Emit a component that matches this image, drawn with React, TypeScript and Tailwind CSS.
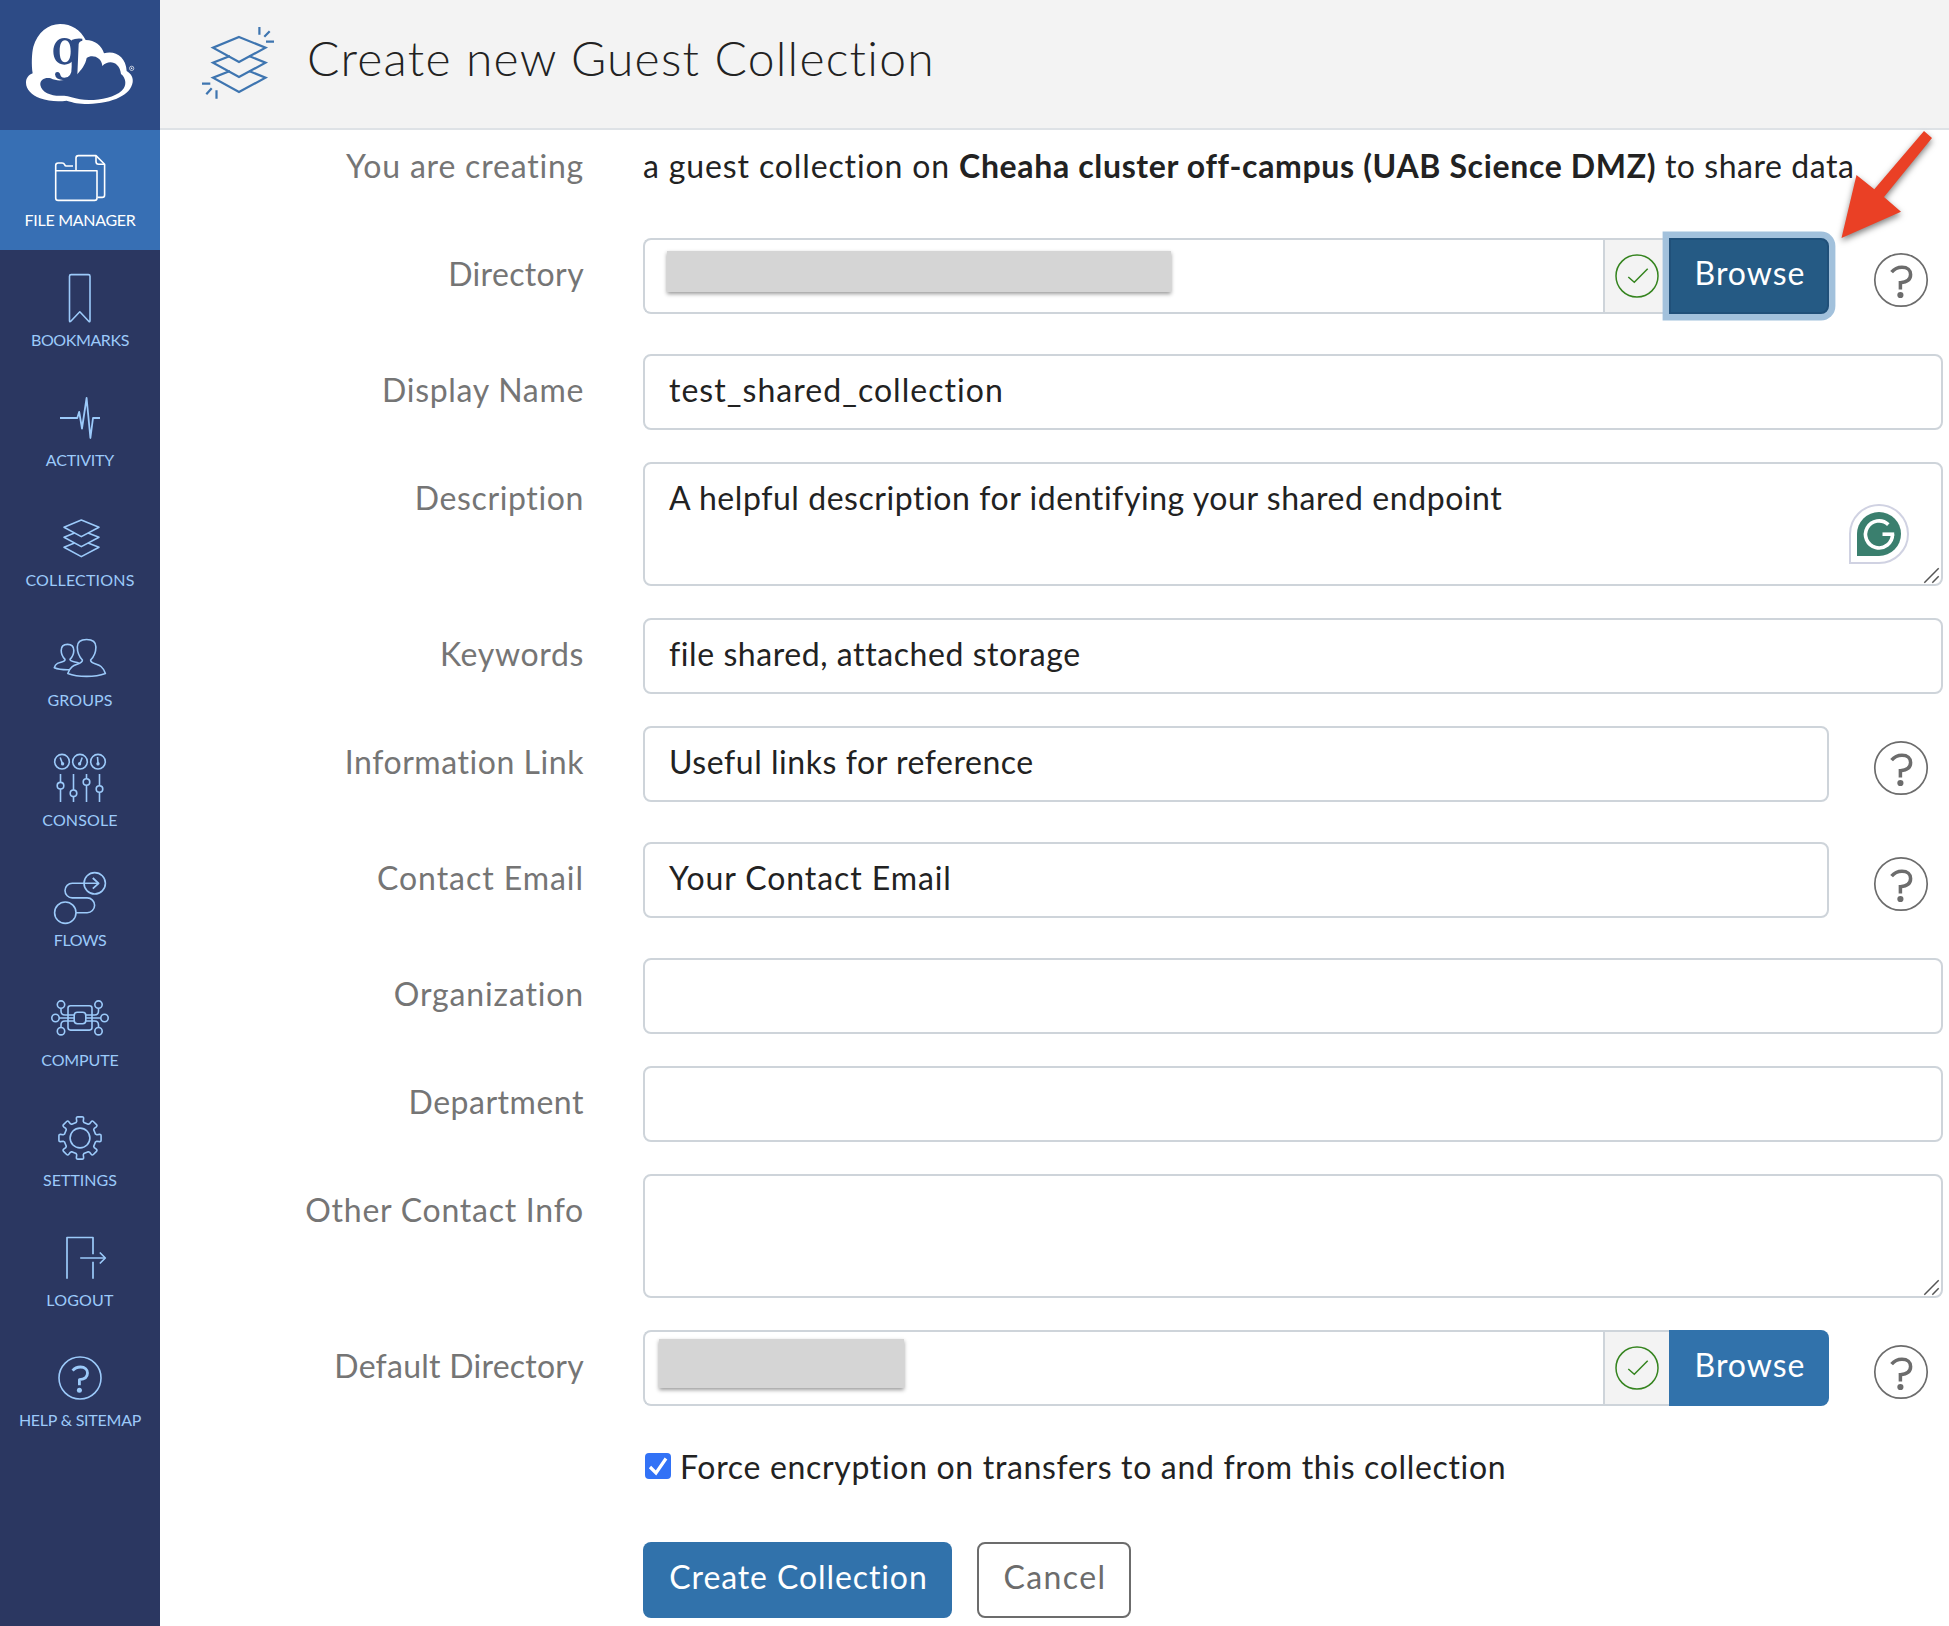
import type { ReactNode } from 'react';

function gearPath(cx: number, cy: number): string {
  const pt = (r: number, deg: number) => {
    const a = (deg * Math.PI) / 180;
    return `${(cx + r * Math.cos(a)).toFixed(2)} ${(cy + r * Math.sin(a)).toFixed(2)}`;
  };
  const parts: string[] = [];
  for (let i = 0; i < 8; i++) {
    const a = i * 45;
    parts.push(`${i === 0 ? 'M' : 'L'}${pt(16, a - 14)}`);
    parts.push(`L${pt(17.2, a - 11)}L${pt(19.8, a - 10.5)}Q${pt(21.4, a - 10)} ${pt(21.2, a - 6)}`);
    parts.push(`L${pt(21.2, a + 6)}Q${pt(21.4, a + 10)} ${pt(19.8, a + 10.5)}L${pt(17.2, a + 11)}L${pt(16, a + 14)}`);
  }
  return parts.join('') + 'Z';
}

const icons: Record<string, ReactNode> = {
  files: (
    <>
      <path d="M55.7 41V35.5Q55.7 33 58.2 33H62Q64 33 64.6 34.6T66.6 36H73" />
      <path d="M55.7 40.8H97V68Q97 70.4 94.6 70.4H58.1Q55.7 70.4 55.7 68Z" />
      <path d="M76 40.5V28Q76 25.6 78.4 25.6H96L104.6 34.2V65Q104.6 67.4 102.2 67.4H97.5" />
      <path d="M96 26V31.5Q96 34.2 98.7 34.2H104.3" />
    </>
  ),
  bookmark: <path d="M69.5 26.2Q69.5 24.6 71.1 24.6H88.4Q90 24.6 90 26.2V70.6Q90 72.6 88.7 71.2L79.8 61.8L70.8 71.2Q69.5 72.6 69.5 70.6Z" />,
  activity: <path strokeWidth="1.8" d="M60 48H77.3L79.2 41.8L82 58.5L86.6 28L90.4 68L93 48H100" />,
  collections: (
    <>
      <path d="M81.3 30L99 37.2L81.3 46.6L64 37.2Z" />
      <path d="M74.5 43L64 47.2L81.3 56.6L99 47.2L88 43" />
      <path d="M74.5 53L64 57.2L81.3 66.6L99 57.2L88 53" />
    </>
  ),
  groups: (
    <>
      <path d="M82.4 50C79 46.500 77.300 41 77.300 37C77.300 32.200 80.500 29.500 86.600 29.500S95.900 32.200 95.900 37C95.900 41 94.200 46.500 90.600 50C90.500 54 97.500 53.500 101 56.500C103.500 58.700 104.800 61 105.400 63.500C100 65.500 93 66.400 86.600 66.400S73 65.500 67.800 63.500C68.400 61 69.700 58.700 72 56.800C75.500 53.900 82.600 54 82.400 50Z" />
      <path d="M70 59.700C64 59.900 58 59.300 54.300 57.800C54.800 55.800 55.800 54.300 57.500 53.400C60.500 51.900 65.500 52 65 49.400C62.500 46.800 61.200 43.300 61.200 40.500C61.200 36.600 63.300 34.400 67.500 34.400S73.800 36.600 73.800 40.500C73.800 43.300 72.500 46.800 70 49.400C69.700 51.700 75 51.700 79 53.200" />
    </>
  ),
  console: (
    <>
      {[62, 80, 98].map((x) => (
        <circle key={x} cx={x} cy="31.700" r="7.300" />
      ))}
      <path d="M60.200 27.500L62.200 33M82.200 27.500L80.200 33M97.500 27L98 33" />
      <path strokeWidth="3.200" strokeLinecap="round" d="M62.600 33.600V34M79.600 33.600V34M98 33.600V34" />
      <path d="M60.500 44V52.400M60.500 59V72M73.500 44V60M73.500 66.600V72M86.500 44V48.700M86.500 55.300V72M99.500 44V55.700M99.500 62.300V72" />
      <circle cx="60.500" cy="55.700" r="3.300" />
      <circle cx="73.500" cy="63.300" r="3.300" />
      <circle cx="86.500" cy="52" r="3.300" />
      <circle cx="99.500" cy="59" r="3.300" />
    </>
  ),
  flows: (
    <>
      <circle cx="94.700" cy="33.300" r="10.700" />
      <circle cx="65.300" cy="62.700" r="10.700" />
      <path d="M98.500 33.300H72.300A7.300 7.300 0 0 0 72.300 47.900H87.200A7.400 7.400 0 0 1 87.200 62.700H76" />
      <path strokeWidth="1.800" d="M92.800 28L98.600 33.300L92.800 38.600" />
    </>
  ),
  compute: (
    <>
      <rect x="68" y="35.700" width="24" height="24.400" rx="2.500" />
      <rect x="74.200" y="42.300" width="11.600" height="11.400" rx="3.200" />
      <circle cx="61" cy="34.600" r="3.700" />
      <circle cx="98.500" cy="34.600" r="3.700" />
      <circle cx="55.500" cy="48" r="3.700" />
      <circle cx="104.500" cy="48" r="3.700" />
      <circle cx="61" cy="61.200" r="3.700" />
      <circle cx="98.500" cy="61.200" r="3.700" />
      <path d="M59.200 48H74M61 38.300V41Q61 45 65 45H74M61 57.500V55Q61 51 65 51H74" />
      <path d="M100.800 48H86M98.500 38.300V41Q98.500 45 94.500 45H86M98.500 57.500V55Q98.500 51 94.500 51H86" />
    </>
  ),
  settings: (
    <>
      <circle cx="80" cy="48" r="9.900" />
      <path d={gearPath(80, 48)} />
    </>
  ),
  logout: (
    <>
      <path strokeWidth="1.700" d="M67 68.700V27.500H93V44.300M93 51.700V68.700M80.200 48H105" />
      <path strokeWidth="1.700" d="M99.800 42.500L105.300 48L99.800 53.500" />
    </>
  ),
  help: (
    <>
      <circle cx="80" cy="48" r="21" />
      <path strokeWidth="2.800" d="M72.600 40.600Q75.600 37 80.500 37C85 37 87.500 39.600 87.500 43C87.500 47.300 84.500 49.300 79.400 49.700V55.200" />
      <circle cx="79.400" cy="60.300" r="2.500" fill="currentColor" stroke="none" />
    </>
  ),
};

const nav = [
  { icon: 'files', label: 'FILE MANAGER', cls: 'tracking-[-0.3px]' },
  { icon: 'bookmark', label: 'BOOKMARKS', cls: 'tracking-[-0.4px]' },
  { icon: 'activity', label: 'ACTIVITY', cls: 'tracking-[-0.2px]' },
  { icon: 'collections', label: 'COLLECTIONS', cls: 'tracking-[0.2px]' },
  { icon: 'groups', label: 'GROUPS', cls: 'tracking-[0.1px]' },
  { icon: 'console', label: 'CONSOLE', cls: 'tracking-[0.13px]' },
  { icon: 'flows', label: 'FLOWS', cls: 'tracking-[-0.4px]' },
  { icon: 'compute', label: 'COMPUTE', cls: 'tracking-[-0.12px]' },
  { icon: 'settings', label: 'SETTINGS', cls: 'tracking-[0.02px]' },
  { icon: 'logout', label: 'LOGOUT', cls: 'tracking-[0.19px]' },
  { icon: 'help', label: 'HELP & SITEMAP', cls: 'tracking-[-0.24px]' },
];

function Logo() {
  return (
    <svg className="ml-5 mt-2.5 h-[110px] w-[120px]" viewBox="0 0 360 330">
      <path
        fill="#fff"
        d="M38 190C34 165 35 130 40 110C52 68 85 42 120 42C155 42 182 60 197 90C225 90 245 107 252 130C285 120 318 140 320 183C335 192 340 205 338 217C332 255 280 280 205 282C175 282 160 278 140 272C115 276 85 274 60 265C35 255 18 238 18 218C18 205 25 195 38 190Z"
      />
      <path
        fill="#2d4b86"
        d="M170 194C184 180 196 165 200 144C215 132 245 140 247 168C266 148 299 155 303 192C318 203 322 228 305 242C280 265 220 275 180 268C160 264 145 256 130 257C100 260 65 250 61 225C60 208 75 202 92 205C105 212 120 212 132 210C142 211 158 206 170 194Z"
      />
      <path
        fill="#2d4b86"
        fillRule="evenodd"
        d="M133 84C155 84 168 102 168 124S155 164 133 164S100 146 100 124S112 84 133 84ZM135 91C124 91 119 104 119 124S124 157 135 157S152 144 152 124S146 91 135 91Z"
      />
      <path fill="#2d4b86" d="M155 90Q166 84 187 86V92Q177 94 176 102L172 196Q158 212 132 211Q106 209 105 193Q106 184 116 187C124 192 118 203 133 203Q156 203 155 170Z" />
      <circle cx="335" cy="175" r="6.500" fill="none" stroke="#fff" strokeWidth="2" />
      <circle cx="335" cy="175" r="2.300" fill="#fff" />
    </svg>
  );
}

function Help() {
  return (
    <svg className="ml-[44px] mt-[14px] h-14 w-14 text-[#6c6c6c]" viewBox="0 0 56 56" fill="none" stroke="currentColor">
      <circle cx="28" cy="28" r="26.200" strokeWidth="1.700" />
      <path strokeWidth="3.500" d="M18.600 20.200Q22.500 15.300 29 15.300C34.500 15.300 37.600 18.300 37.600 22.500C37.600 28 33.800 30.200 27.400 30.700V37.600" />
      <circle cx="27.400" cy="43" r="3.100" fill="currentColor" stroke="none" />
    </svg>
  );
}

function Row({ label, cls, gap, children }: { label: string; cls: string; gap: string; children: ReactNode }) {
  return (
    <div className={`flex items-start ${gap}`}>
      <div className={`w-[424px] shrink-0 pt-3 text-right text-[#757575] ${cls}`}>{label}</div>
      <div className="ml-[59px] flex h-full items-start">{children}</div>
    </div>
  );
}

const box = 'rounded-[8px] border-2 border-[#ced4da] bg-white px-6 pt-2.5';

function DirectoryField({ focused, children }: { focused?: boolean; children: ReactNode }) {
  return (
    <div className="flex h-[76px] w-[1186px]">
      <div className="w-[960px] rounded-l-[8px] border-2 border-r-0 border-[#ced4da] bg-white">{children}</div>
      <div className="flex w-[66px] items-center justify-center border-y-2 border-l-2 border-[#ced4da] bg-[#f3f3f3]">
        <svg className="h-11 w-11" viewBox="-22 -22 44 44" fill="none" stroke="#35841f" strokeWidth="1.500">
          <circle r="21" />
          <path d="M-8.700 1L-2.700 6.200L10.700 -7.300" />
        </svg>
      </div>
      <button
        className={
          focused
            ? 'relative w-40 rounded-r-[8px] border-2 border-[#205079] bg-[#255a84] pb-1.5 pl-0.5 tracking-[0.98px] text-white shadow-[0_0_0_6.400px_#a2c1dc]'
            : 'w-40 rounded-r-[8px] bg-[#3172ab] pb-1.5 pl-0.5 tracking-[0.98px] text-white'
        }
      >
        Browse
      </button>
    </div>
  );
}

function Grip() {
  return (
    <svg className="absolute bottom-0 right-0 h-5 w-5" viewBox="0 0 20 20" stroke="#555" strokeWidth="1.500">
      <path d="M3.300 18.700L17.700 4.300M11.300 18.700L17.700 12.300" />
    </svg>
  );
}

export default function App() {
  return (
    <div className="flex h-[1626px] w-[1949px] overflow-hidden bg-white font-['Lato',sans-serif] text-[32px] leading-[48px] text-[#222]">
      <aside className="w-40 shrink-0 bg-[#2b3761]">
        <div className="h-[130px] overflow-hidden bg-[#2d4b86]">
          <Logo />
        </div>
        {nav.map((n, i) => (
          <div key={n.label} className={`flex h-[120px] flex-col items-center pt-[18px] ${i === 0 ? 'bg-[#376fb4] text-white' : 'text-[#9ccafa]'}`}>
            <svg className="h-[60px] w-20" viewBox="40 18 80 60" fill="none" stroke="currentColor" strokeWidth="1.600" strokeLinejoin="round">
              {icons[n.icon]}
            </svg>
            <span className={`mt-0.5 whitespace-nowrap text-base leading-5 ${n.cls}`}>{n.label}</span>
          </div>
        ))}
      </aside>

      <main className="relative w-[1789px]">
        <header className="flex h-[130px] items-start border-b-2 border-[#dee2e6] bg-[#f3f3f3]">
          <svg className="ml-10 mt-5 h-[84px] w-20" viewBox="200 20 80 84" fill="none" stroke="#3e75b0" strokeWidth="2.200">
            <path d="M239 37L265.500 47.700L239 62L213 47.700Z" />
            <path d="M230 56L213 62.700L239 77L265.500 62.700L249 56" />
            <path d="M230 71L213 77.700L239 92L265.500 77.700L249 71" />
            <path d="M259.400 27V34.700M269.700 31.300L264.300 36.700M266 41.700H274M202 83.700H210.300M211.700 88.300L206.300 94.300M216.500 90.300V98.700" />
          </svg>
          <h1 className="ml-[27px] mt-7 text-[48px] font-light leading-[60px] tracking-[1.24px]">Create new Guest Collection</h1>
        </header>

        <Row label="You are creating" cls="tracking-[0.8px]" gap="mb-12">
          <div className="whitespace-nowrap pt-3">
            <span className="tracking-[0.87px]">a guest collection on </span>
            <strong className="font-bold tracking-[0.65px]">Cheaha cluster off-campus (UAB Science DMZ)</strong>
            <span className="tracking-[0.55px]"> to share data</span>
          </div>
        </Row>

        <Row label="Directory" cls="tracking-[0.37px]" gap="h-[76px] mb-10">
          <DirectoryField focused>
            <div className="ml-[22px] mt-[11px] h-[41px] w-[504px] bg-[#d5d5d5] shadow-[0_2px_4px_rgba(0,0,0,0.4)]" />
          </DirectoryField>
          <Help />
        </Row>

        <Row label="Display Name" cls="tracking-[0.7px]" gap="mb-8">
          <div className={`h-[76px] w-[1300px] tracking-[1.04px] ${box}`}>test_shared_collection</div>
        </Row>

        <Row label="Description" cls="tracking-[0.62px]" gap="mb-8">
          <div className={`relative h-[124px] w-[1300px] tracking-[0.56px] ${box}`}>
            A helpful description for identifying your shared endpoint
            <div className="absolute right-8 top-[40px] flex h-[60px] w-[60px] items-center justify-center rounded-full rounded-bl-none border-2 border-[#d0d2e2] bg-white">
              <div className="h-11 w-11 rounded-full rounded-bl-none bg-[#3a7f6e]">
                <svg className="h-11 w-11" viewBox="0 0 44 44" fill="none" stroke="#fff" strokeWidth="3.600">
                  <path d="M31.300 12.600A13.500 13.500 0 1 0 35.500 22.300" />
                  <path d="M25.500 22.200H37.200" />
                </svg>
              </div>
            </div>
            <Grip />
          </div>
        </Row>

        <Row label="Keywords" cls="tracking-[0.65px]" gap="mb-8">
          <div className={`h-[76px] w-[1300px] tracking-[0.57px] ${box}`}>file shared, attached storage</div>
        </Row>

        <Row label="Information Link" cls="tracking-[0.55px]" gap="h-[76px] mb-10">
          <div className={`h-[76px] w-[1186px] tracking-[0.55px] ${box}`}>Useful links for reference</div>
          <Help />
        </Row>

        <Row label="Contact Email" cls="tracking-[0.95px]" gap="h-[76px] mb-10">
          <div className={`h-[76px] w-[1186px] tracking-[0.92px] ${box}`}>Your Contact Email</div>
          <Help />
        </Row>

        <Row label="Organization" cls="tracking-[0.85px]" gap="mb-8">
          <div className={`h-[76px] w-[1300px] ${box}`} />
        </Row>

        <Row label="Department" cls="tracking-[0.52px]" gap="mb-8">
          <div className={`h-[76px] w-[1300px] ${box}`} />
        </Row>

        <Row label="Other Contact Info" cls="tracking-[0.75px]" gap="mb-8">
          <div className={`relative h-[124px] w-[1300px] ${box}`}>
            <Grip />
          </div>
        </Row>

        <Row label="Default Directory" cls="tracking-[0.25px]" gap="h-[76px]">
          <DirectoryField>
            <div className="ml-[14px] mt-[7px] h-[49px] w-[245px] bg-[#d5d5d5] shadow-[0_2px_4px_rgba(0,0,0,0.4)]" />
          </DirectoryField>
          <Help />
        </Row>

        <div className="ml-[485px] mt-[37px] flex h-12">
          <svg className="mt-2.5 h-[26px] w-[26px] rounded bg-[#3272f6]" viewBox="0 0 26 26" fill="none" stroke="#fff" strokeWidth="3.200">
            <path d="M5 14L11 20L21 5.500" />
          </svg>
          <span className="ml-[9px] whitespace-nowrap tracking-[0.67px]">Force encryption on transfers to and from this collection</span>
        </div>

        <div className="ml-[483px] mt-[51px] flex gap-[25px]">
          <button className="h-[76px] w-[309px] rounded-[8px] bg-[#3172ab] pb-1.5 pl-0.5 tracking-[0.9px] text-white">Create Collection</button>
          <button className="h-[76px] w-[154px] rounded-[8px] border-2 border-[#6c6c6c] pb-1.5 pl-0.5 tracking-[1.4px] text-[#6c6c6c]">Cancel</button>
        </div>

        <svg className="absolute left-[1670px] top-[120px] h-[130px] w-[119px] drop-shadow-[0_3px_3px_rgba(0,0,0,0.5)]" viewBox="1830 120 119 130">
          <path fill="#ea4025" d="M1924 131L1932 138L1884 197L1901 211.700L1841.500 238L1856.500 175L1874.300 189.300Z" />
        </svg>
      </main>
    </div>
  );
}
